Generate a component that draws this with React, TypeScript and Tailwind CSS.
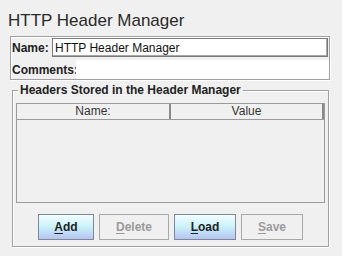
export default function App() {
  return (
    <div className="w-[342px] h-[256px] bg-[#f0f0f0] overflow-hidden text-[#333] font-['Liberation_Sans',Arial,sans-serif]">
      <div className="pt-[11px] pl-[8px] text-[17px] leading-[20px] text-[#2a2a2a]">HTTP Header Manager</div>

      {/* name / comments */}
      <div className="mt-[5px] ml-[10px] w-[320px] h-[44px] border border-[#a0a0a0] shadow-[1px_1px_0_#fff,inset_1px_1px_0_#fff] flex flex-col">
        <div className="flex items-start h-[20px] pt-[1px]">
          <span className="w-[41px] pl-[1px] pt-[2px] text-[12px] leading-[17px] font-bold text-[#222]">Name:</span>
          <div className="w-[276px] h-[19px] bg-white border border-[#7a7a7a] shadow-[inset_-1px_-1px_0_#a8a8a8] pl-[2px] pt-[1px] text-[12px] leading-[17px] text-[#111]">
            HTTP Header Manager
          </div>
        </div>
        <div className="flex mt-[3px] h-[19px]">
          <span className="w-[65px] pl-[1px] pt-[2px] text-[12px] leading-[17px] font-bold text-[#222]">Comments:</span>
          <div className="flex-1 bg-white" />
        </div>
      </div>

      {/* headers group */}
      <fieldset className="mt-[3px] ml-[12px] w-[317px] h-[164px] border border-[#a0a0a0] shadow-[1px_1px_0_#fff,inset_1px_1px_0_#fff] px-[3px]">
        <legend className="ml-[2px] px-[2px] bg-[#f0f0f0] text-[12px] leading-[14px] font-bold text-[#222]">
          Headers Stored in the Header Manager
        </legend>
        <div className="mt-[6px] h-[100px] border-l border-r border-b border-[#9a9a9a] flex flex-col">
          <div className="flex h-[17px] border-t border-b border-[#9a9a9a] text-[12px] leading-[15px] text-[#333]">
            <div className="w-[154px] border-r-2 border-[#8a8a8a] text-center">Name:</div>
            <div className="flex-1 border-r-2 border-[#8a8a8a] text-center">Value</div>
          </div>
          <div className="flex-1" />
        </div>
        <div className="mt-[11px] flex justify-center gap-[5px] text-[12px] font-bold">
          <button className="w-[56px] h-[26px] leading-[24px] border border-[#808a96] bg-gradient-to-b from-[#f2fdff] via-[#c9f1f9] to-[#b6c3f1] text-[#222]">
            <span className="underline underline-offset-2">A</span>dd
          </button>
          <button className="w-[70px] h-[26px] leading-[24px] border border-[#a8a8a8] text-[#9a9a9a]">
            <span className="underline underline-offset-2">D</span>elete
          </button>
          <button className="w-[62px] h-[26px] leading-[24px] border border-[#808a96] bg-gradient-to-b from-[#f2fdff] via-[#c9f1f9] to-[#b6c3f1] text-[#222]">
            <span className="underline underline-offset-2">L</span>oad
          </button>
          <button className="w-[62px] h-[26px] leading-[24px] border border-[#a8a8a8] text-[#9a9a9a]">
            <span className="underline underline-offset-2">S</span>ave
          </button>
        </div>
      </fieldset>
    </div>
  );
}
